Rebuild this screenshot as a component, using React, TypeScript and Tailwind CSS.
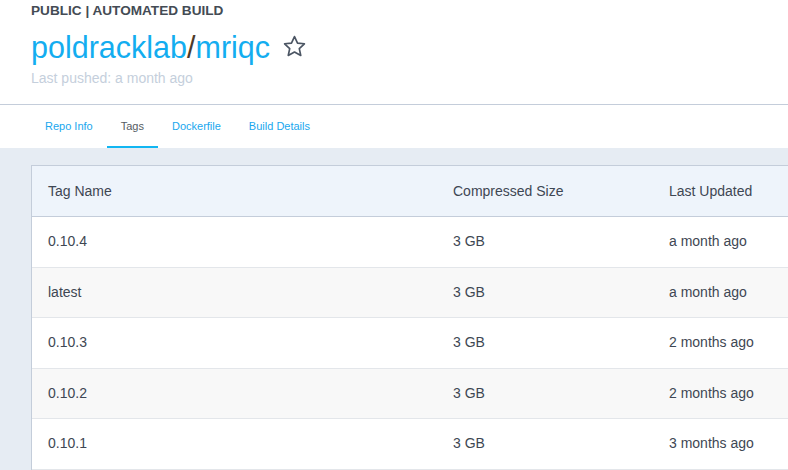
const rows = [
  { tag: '0.10.4', size: '3 GB', updated: 'a month ago' },
  { tag: 'latest', size: '3 GB', updated: 'a month ago' },
  { tag: '0.10.3', size: '3 GB', updated: '2 months ago' },
  { tag: '0.10.2', size: '3 GB', updated: '2 months ago' },
  { tag: '0.10.1', size: '3 GB', updated: '3 months ago' },
];

const tabs = ['Repo Info', 'Tags', 'Dockerfile', 'Build Details'];

const Star = () => (
  <svg width="25" height="25" viewBox="0 0 24 24" fill="none" stroke="#4b5563" strokeWidth="1.6" strokeLinejoin="round">
    <path d="M12 2.5l2.9 6.2 6.6.7-4.9 4.6 1.4 6.6L12 17.3l-6 3.3 1.4-6.6-4.9-4.6 6.6-.7z" />
  </svg>
);

export default function App() {
  return (
    <div className="w-[788px] h-[470px] overflow-hidden bg-[#e6ecf3] font-['Liberation_Sans',Arial,sans-serif]">
      {/* repo header */}
      <div className="bg-white px-[31px] pt-[3px] h-[105px] border-b border-[#c4cdda]">
        <div className="text-[13.6px] font-bold text-[#444b54] leading-[16px]">PUBLIC | AUTOMATED BUILD</div>
        <div className="flex items-center mt-[10px] h-[36px]">
          <span className="text-[30.5px] text-[#13adf0] leading-none">
            poldracklab<span className="text-[#4d3b2a]">/</span>mriqc
          </span>
          <span className="ml-[12px] mt-[-2px]"><Star /></span>
        </div>
        <div className="text-[14px] text-[#c5cfdc] mt-[3px]">Last pushed: a month ago</div>
      </div>

      {/* tabs */}
      <div className="bg-white h-[43px] flex pl-[31px]">
        {tabs.map((t) => (
          <div
            key={t}
            className={
              t === 'Tags'
                ? 'px-[14px] pt-[2px] flex items-center text-[11px] text-[#555b63] border-b-2 border-[#12b6f2]'
                : 'px-[14px] pt-[2px] flex items-center text-[11px] text-[#1aa7ee] border-b-2 border-transparent'
            }
          >
            {t}
          </div>
        ))}
      </div>

      {/* tags table */}
      <div className="pt-[17px] pl-[31px]">
        <div className="w-[820px] border border-[#c4cdda] bg-white text-[14px] text-[#3e4753]">
          <div className="grid grid-cols-[405px_216px_1fr] h-[51px] items-center bg-[#eef4fb] border-b border-[#c4cdda] pl-[16px]">
            <div>Tag Name</div>
            <div>Compressed Size</div>
            <div>Last Updated</div>
          </div>
          {rows.map((r, i) => (
            <div
              key={r.tag}
              className={
                i % 2 === 1
                  ? 'grid grid-cols-[405px_216px_1fr] h-[50.5px] items-center bg-[#f8f8f8] border-b border-[#e3e6ea] pl-[16px]'
                  : 'grid grid-cols-[405px_216px_1fr] h-[50.5px] items-center bg-white border-b border-[#e3e6ea] pl-[16px]'
              }
            >
              <div>{r.tag}</div>
              <div>{r.size}</div>
              <div>{r.updated}</div>
            </div>
          ))}
        </div>
      </div>
    </div>
  );
}
